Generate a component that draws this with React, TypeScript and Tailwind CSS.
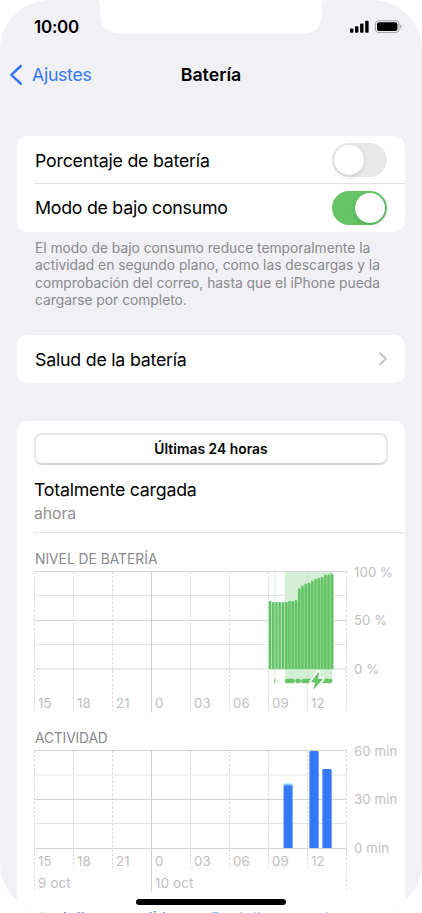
import clsx from 'clsx';

// x positions are measured from the left edge of the plot
const HOURS = ['15', '18', '21', '0', '03', '06', '09', '12'];
const STEP = 39;
const PLOT_W = STEP * HOURS.length;

// top of each bar, 0 = 100 %
const LEVELS = [30, 31, 31, 31, 31, 31, 30, 30, 29, 17.3, 14.4, 12.7, 11.7, 9.7, 8, 6.7, 5.7, 3.7, 3.5, 2.5];

const ACTIVITY = [
  { x: 249.2, top: 33, off: 2 },
  { x: 275.1, top: 0.5, off: 0 },
  { x: 288.1, top: 18.5, off: 0 },
];

const BOLT = 'M284 101.2L277 110.4H281.4L279.6 117L287.7 107.8H283Z';

function Toggle({ on }: { on: boolean }) {
  return (
    <div className={clsx('flex h-[34px] w-[55px] items-center rounded-full px-[2px]', on ? 'justify-end bg-[#65c466]' : 'bg-[#e8e8e9]')}>
      <div className="size-[30px] rounded-full bg-white shadow-[0_2px_5px_rgba(0,0,0,0.12)]" />
    </div>
  );
}

function Grid({ lines, height, dayLines }: { lines: number[]; height: number; dayLines?: boolean }) {
  return (
    <g>
      {lines.map((y, i) => (
        <line key={y} x1={0} x2={PLOT_W} y1={y} y2={y} stroke={i % 2 ? '#e4e4e5' : '#d5d5d7'} />
      ))}
      {[...HOURS, 'end'].map((h, i) => {
        const solid = h === '0';
        const tall = dayLines && (i === 0 || h === 'end');
        return (
          <line
            key={h}
            x1={i * STEP}
            x2={i * STEP}
            y1={0}
            y2={solid && dayLines ? height + 23 : solid ? height + 2 : tall ? height + 21 : height}
            stroke={solid ? '#cfcfd1' : '#d6d6d8'}
            strokeDasharray={solid ? undefined : '2.4 1.9'}
          />
        );
      })}
    </g>
  );
}

function HourLabels({ y }: { y: number }) {
  return (
    <g>
      {HOURS.map((h, i) => (
        <text key={h} x={i * STEP + 3.6} y={y}>{h}</text>
      ))}
    </g>
  );
}

const chartText = "block overflow-visible fill-[#bebec0] font-['Inter',sans-serif] text-[13.2px] tracking-[0.1px]";

function LevelChart() {
  return (
    <svg width={371} height={142} viewBox="-0.5 -0.5 371 142" className={chartText}>
      <rect x={250.3} y={0} width={47.5} height={112} fill="#d3f0d4" />
      <rect x={239.9} y={0} width={1} height={112} fill="#d3f0d4" />
      <Grid lines={[0, 24, 49, 73, 97.5]} height={139} />
      {LEVELS.map((top, i) => (
        <g key={i}>
          <rect x={234.3 + i * 3.25} y={top + 0.8} width={3.25} height={97 - top} fill={i < 5 ? '#b5e5b6' : '#93d995'} />
          <rect x={234.3 + i * 3.25} y={top - 0.5} width={2.3} height={98 - top} rx={0.5} fill="#63c265" />
        </g>
      ))}
      <rect x={239.8} y={107.5} width={1} height={4} fill="#65c466" />
      <rect x={242} y={107.5} width={0.7} height={4} fill="#d3f0d4" />
      <g fill="#65c466">
        <rect x={250.3} y={107.2} width={10} height={4.2} rx={2} />
        <rect x={260.8} y={107.2} width={5.4} height={4.2} rx={2} />
        <rect x={266.8} y={107.2} width={31} height={4.2} rx={2} />
      </g>
      <path d={BOLT} fill="#fff" stroke="#fff" strokeWidth={4.6} strokeLinejoin="round" />
      <path d={BOLT} fill="#65c466" stroke="#65c466" strokeWidth={1} strokeLinejoin="round" />
      <HourLabels y={136.5} />
      <text x={319.5} y={5}>100 %</text>
      <text x={319.5} y={53.7}>50 %</text>
      <text x={319.5} y={102.1}>0 %</text>
    </svg>
  );
}

function ActivityChart() {
  return (
    <svg width={371} height={142} viewBox="-0.5 -0.5 371 142" className={chartText}>
      <Grid lines={[0, 24.5, 49, 73, 98]} height={118} dayLines />
      {ACTIVITY.map(({ x, top, off }) => (
        <g key={x}>
          <path d={`M${x} 97.5V${top + 1}q0 -1 1 -1h6.8q1 0 1 1V97.5z`} fill={off ? '#83c9f2' : '#3478f6'} />
          <rect x={x} y={top + Math.max(off, 1)} width={8.8} height={97.5 - top - Math.max(off, 1)} fill="#3478f6" />
        </g>
      ))}
      <HourLabels y={115.3} />
      <text x={3.6} y={137.3} className="tracking-[0.22px]">9 oct</text>
      <text x={120.6} y={137.3} className="tracking-[0.22px]">10 oct</text>
      <text x={319.5} y={5}>60 min</text>
      <text x={319.5} y={53.7}>30 min</text>
      <text x={319.5} y={102.4}>0 min</text>
    </svg>
  );
}

function StatusBar() {
  return (
    <div className="flex h-[54px] items-center justify-between pr-[20px] pl-[34px]">
      <span className="pt-[2px] text-[17px] font-semibold tracking-[-0.25px]">10:00</span>
      <svg width={53} height={14} viewBox="0 0 53 14">
        <rect x={1} y={8.5} width={3.4} height={4.2} rx={1} />
        <rect x={6} y={6.3} width={3.4} height={6.4} rx={1} />
        <rect x={11.1} y={3.5} width={3.4} height={9.2} rx={1} />
        <rect x={16.2} y={0.7} width={3.4} height={12} rx={1} />
        <rect x={26.4} y={0.8} width={23.6} height={11.7} rx={3.6} fill="none" stroke="#a5a5a9" strokeWidth={1.1} />
        <rect x={28} y={2.3} width={20.4} height={8.7} rx={2} />
        <path d="M51.1 4.8c1.1.4 1.5 1 1.5 1.9s-.4 1.5-1.5 1.9z" fill="#a5a5a9" />
      </svg>
    </div>
  );
}

export default function App() {
  return (
    <div className="h-[913px] w-[422px] bg-white font-['Inter',sans-serif] text-black">
      <div className="relative h-[913px] overflow-hidden rounded-[50px] bg-[#f0f0f5]">
        {/* notch */}
        <svg width={230} height={34} viewBox="96 0 230 34" className="absolute top-0 left-[96px]">
          <path d="M96 0C99 0 100 1.5 100 5V13C100 27 107 33.5 120 33.5H302C315 33.5 322 27 322 13V5C322 1.5 323 0 326 0Z" fill="#fff" />
        </svg>

        <StatusBar />

        <div className="grid h-[42px] grid-cols-3 items-center">
          <div className="flex items-center gap-[9px] pl-[9px] text-[#3478f6]">
            <svg width={14} height={22} viewBox="0 0 14 22" fill="none" stroke="currentColor" strokeWidth={2.5} strokeLinecap="round" strokeLinejoin="round">
              <path d="M11.8 2L2.3 10.8L11.8 19.7" />
            </svg>
            <span className="text-[17.8px] tracking-[-0.34px]">Ajustes</span>
          </div>
          <h1 className="text-center text-[17.8px] font-semibold">Batería</h1>
        </div>

        <div className="mx-[17px] mt-[40px] rounded-[10px] bg-white pl-[18px]">
          <div className="flex h-[48px] items-center justify-between border-b border-[#e2e2e4] pr-[18px]">
            <span className="pt-[3px] text-[17.8px] tracking-[-0.23px]">Porcentaje de batería</span>
            <Toggle on={false} />
          </div>
          <div className="flex h-[47.5px] items-center justify-between pr-[18px]">
            <span className="pt-[2px] text-[17.8px] tracking-[-0.27px]">Modo de bajo consumo</span>
            <Toggle on />
          </div>
        </div>
        <p className="mt-[8.5px] ml-[35px] text-[13.8px] leading-[17.4px] whitespace-nowrap text-[#89898e]">
          El modo de bajo consumo reduce temporalmente la
          <br />
          actividad en segundo plano, como las descargas y la
          <br />
          comprobación del correo, hasta que el iPhone pueda
          <br />
          cargarse por completo.
        </p>

        <div className="mx-[17px] mt-[25.5px] flex h-[48px] items-center justify-between rounded-[10px] bg-white pr-[17px] pl-[18px]">
          <span className="pt-[2px] text-[17.8px] tracking-[-0.23px]">Salud de la batería</span>
          <svg width={10} height={14} viewBox="0 0 10 14" fill="none" stroke="#c4c4c7" strokeWidth={2} strokeLinecap="round" strokeLinejoin="round">
            <path d="M1.9 1.2L8 6.8L1.9 12.4" />
          </svg>
        </div>

        <div className="mx-[17px] mt-[38px] h-[500px] rounded-t-[10px] bg-white pl-[17px]">
          <div className="pt-[12px] pr-[17px]">
            <div className="flex h-[32px] items-center justify-center rounded-[8px] border-2 border-[#e6e6e7] border-b-[#d6d6d8] text-[13.8px] font-semibold tracking-[0.05px]">
              Últimas 24 horas
            </div>
          </div>
          <div className="mt-[11px] h-[57px] border-b border-[#e2e2e4]">
            <p className="pt-[1px] text-[17.8px] leading-[26px] tracking-[-0.24px]">Totalmente cargada</p>
            <p className="text-[15.8px] leading-[22px] tracking-[-0.1px] text-[#929296]">ahora</p>
          </div>

          <h2 className="mt-[16px] h-[22px] pl-[1px] text-[13.8px] leading-[20px] text-[#89898e]">NIVEL DE BATERÍA</h2>
          <LevelChart />
          <h2 className="mt-[15px] h-[22px] pl-[1px] text-[13.8px] leading-[20px] tracking-[-0.15px] text-[#89898e]">ACTIVIDAD</h2>
          <ActivityChart />

          <div className="mt-[16px] flex pl-[1px] text-[15px] leading-[20px] whitespace-nowrap">
            <span className="w-[176px] tracking-[0.31px] text-[#3478c8]">Pantalla encendida</span>
            <span className="tracking-[0.31px] text-[#83c9f2]">Pantalla apagada</span>
          </div>
        </div>

        {/* home indicator */}
        <div className="absolute bottom-[8.5px] left-[136px] h-[5.5px] w-[150px] rounded-full bg-black" />
      </div>
    </div>
  );
}
